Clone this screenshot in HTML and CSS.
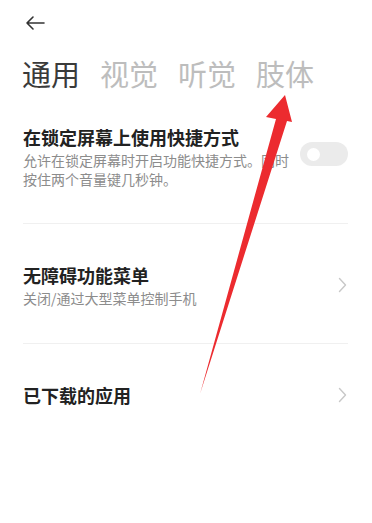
FILE: index.html
```html
<!DOCTYPE html>
<html lang="zh-CN">
<head>
<meta charset="utf-8">
<link rel="stylesheet" href="styles.css">
</head>
<body>
<div class="page">
  <div class="topbar">
    <svg class="back" width="22" height="16" viewBox="0 0 22 16">
      <path d="M20 8H3M9 2L3 8l6 6" fill="none" stroke="#333" stroke-width="1.6" stroke-linecap="round" stroke-linejoin="round"/>
    </svg>
  </div>
  <div class="tabs">
    <span class="tab active">通用</span>
    <span class="tab">视觉</span>
    <span class="tab">听觉</span>
    <span class="tab">肢体</span>
  </div>
  <div class="list">
    <div class="row row1">
      <div class="text">
        <div class="title">在锁定屏幕上使用快捷方式</div>
        <div class="sub">允许在锁定屏幕时开启功能快捷方式。同时按住两个音量键几秒钟。</div>
      </div>
      <div class="toggle"><span class="knob"></span></div>
    </div>
    <div class="row row2">
      <div class="text">
        <div class="title">无障碍功能菜单</div>
        <div class="sub">关闭/通过大型菜单控制手机</div>
      </div>
      <svg class="chev" width="9" height="16" viewBox="0 0 9 16"><path d="M1.5 1.5L7.5 8l-6 6.5" fill="none" stroke="#c8c8c8" stroke-width="1.4" stroke-linecap="round" stroke-linejoin="round"/></svg>
    </div>
    <div class="row row3">
      <div class="text">
        <div class="title">已下载的应用</div>
      </div>
      <svg class="chev" width="9" height="16" viewBox="0 0 9 16"><path d="M1.5 1.5L7.5 8l-6 6.5" fill="none" stroke="#c8c8c8" stroke-width="1.4" stroke-linecap="round" stroke-linejoin="round"/></svg>
    </div>
  </div>
  <svg class="annot" width="372" height="523" viewBox="0 0 372 523">
    <polygon points="200,394 276,119 266,117 285,95 292,122 287,121" fill="#ec2b2f"/>
  </svg>
</div>
</body>
</html>
```
FILE: styles.css
```css
html, body {
  margin: 0;
  padding: 0;
  background: #fff;
}
body {
  font-family: "Noto Sans CJK SC", "Noto Sans", sans-serif;
  color: #222;
}
.page {
  position: relative;
  width: 372px;
  height: 523px;
  overflow: hidden;
}
.topbar {
  padding: 15px 0 0 24px;
  height: 20px;
}
.back {
  display: block;
}
.tabs {
  display: flex;
  gap: 20px;
  padding: 20px 0 0 22px;
  font-size: 29px;
  line-height: 36px;
}
.tab {
  color: #bdbdbd;
}
.tab.active {
  color: #3a3a3a;
}
.list {
  padding: 0 24px 0 23px;
  margin-top: 25px;
}
.row {
  display: flex;
  align-items: center;
  justify-content: space-between;
  border-bottom: 1px solid #f0f0f0;
  box-sizing: border-box;
}
.row1 {
  height: 108px;
  align-items: flex-start;
  padding-top: 9px;
}
.row2 {
  height: 120px;
  padding-top: 3px;
}
.row3 {
  height: 104px;
  border-bottom: none;
  padding-bottom: 2px;
}
.title {
  font-size: 18px;
  font-weight: 700;
  color: #222;
  line-height: 24px;
}
.sub {
  font-size: 14px;
  color: #8c8c8c;
  line-height: 19px;
  margin-top: 2px;
}
.row1 .text {
  width: 268px;
}
.toggle {
  width: 48px;
  height: 24px;
  border-radius: 12px;
  background: #ebebeb;
  display: flex;
  align-items: center;
  padding-left: 7px;
  box-sizing: border-box;
  margin-top: 17px;
}
.knob {
  width: 13px;
  height: 13px;
  border-radius: 50%;
  background: #fff;
}
.chev {
  display: block;
  margin-right: 1px;
}
.annot {
  position: absolute;
  left: 0;
  top: 0;
  pointer-events: none;
}
```
